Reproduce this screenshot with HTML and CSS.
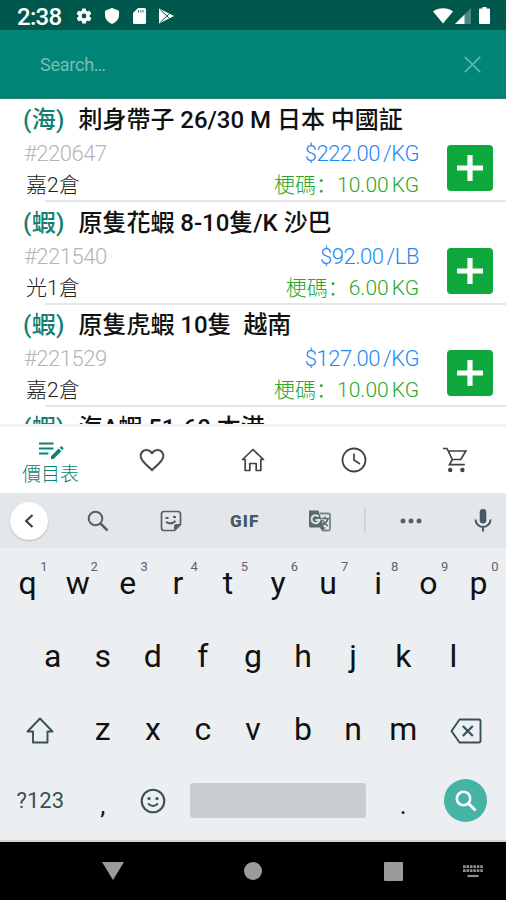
FILE: index.html
```
<!DOCTYPE html>
<html lang="zh-Hant">
<head>
<meta charset="utf-8">
<title>價目表</title>
<link rel="stylesheet" href="styles.css">
</head>
<body>
<div class="phone">
  <header class="status">
    <span class="clock">2:38</span>
    <svg class="st-gear" width="18" height="18" viewBox="0 0 24 24"><path fill="#fff" fill-rule="evenodd" d="M19.4 13a7.500 7.500 0 0 0 0-2l2.100-1.600a.5.5 0 0 0 .1-.6l-2-3.500a.5.5 0 0 0-.6-.2l-2.500 1a7.300 7.300 0 0 0-1.700-1l-.4-2.600a.5.5 0 0 0-.5-.4h-4a.5.5 0 0 0-.5.400l-.4 2.600a7.300 7.300 0 0 0-1.700 1l-2.500-1a.5.5 0 0 0-.6.2l-2 3.500a.5.5 0 0 0 .1.600L4.600 11a7.500 7.500 0 0 0 0 2l-2.100 1.600a.5.5 0 0 0-.1.600l2 3.500c.1.200.4.300.6.200l2.500-1a7.300 7.300 0 0 0 1.700 1l.4 2.600c0 .3.200.4.500.4h4c.3 0 .5-.1.500-.4l.4-2.600a7.300 7.300 0 0 0 1.700-1l2.500 1c.2.100.5 0 .6-.2l2-3.500a.5.5 0 0 0-.1-.6zM12 15.200a3.200 3.200 0 1 1 0-6.400 3.200 3.200 0 0 1 0 6.400z"/></svg>
    <svg class="st-shield" width="14" height="16" viewBox="0 0 14 16"><path fill="#fff" d="M7 0l7 2.800V7c0 4-3 7.500-7 9-4-1.500-7-5-7-9V2.800z"/></svg>
    <svg class="st-card" width="13" height="16" viewBox="0 0 13 16"><path fill="#fff" d="M5 0h6.500Q13 0 13 1.500v13q0 1.500-1.500 1.500h-10Q0 16 0 14.500V5z"/><path stroke="#00574b" stroke-width=".8" d="M5.500 2v2.500M7.800 2v2.500M10 2v2.500"/></svg>
    <svg class="st-play" width="15" height="16" viewBox="0 0 15 16"><path fill="#fff" d="M0 .5l15 7.500L0 15.500z"/><path fill="none" stroke="#00574b" stroke-width="1" d="M1.500 2l8.500 8M1.500 14L10 6"/></svg>
    <span class="grow"></span>
    <svg class="st-wifi" width="20" height="16" viewBox="0 0 20 16"><path fill="#fff" d="M0 3.500C5.500-.8 14.500-.8 20 3.500L10 15.500z"/></svg>
    <svg class="st-signal" width="16" height="16" viewBox="0 0 16 16"><path fill="#4d8981" d="M9 7l7-7v16H9z"/><path fill="#fff" d="M0 16l9.500-9.500V16z"/></svg>
    <svg class="st-batt" width="11" height="17" viewBox="0 0 11 17"><path fill="#fff" d="M3.500 0h4v1.500H10q1 0 1 1V16q0 1-1 1H1q-1 0-1-1V2.500q0-1 1-1h2.500z"/></svg>
  </header>

  <div class="search">
    <span class="placeholder">Search…</span>
    <svg width="17" height="17" viewBox="0 0 17 17"><path fill="none" stroke="#65b3aa" stroke-width="1.700" d="M.8.8l15.400 15.400M16.200.8L.8 16.200"/></svg>
  </div>

  <main class="list">
    <article class="item">
      <h2><span class="cat">(海)</span><span class="name">刺身帶子 26/30 M 日本 中國証</span></h2>
      <div class="line"><span class="code">#220647</span><span class="price">$222.00<i></i>/KG</span></div>
      <div class="line store-line"><span class="store">嘉2倉</span><span class="stock">梗碼<b lang="zh-Hans">：</b>10.00<i></i>KG</span></div>
      <button class="add"><svg width="26" height="26" viewBox="0 0 26 26"><path stroke="#fff" stroke-width="5.200" d="M13 0v26M0 13h26"/></svg></button>
    </article>
    <article class="item">
      <h2><span class="cat">(蝦)</span><span class="name">原隻花蝦 8-10隻/K 沙巴</span></h2>
      <div class="line"><span class="code">#221540</span><span class="price">$92.00<i></i>/LB</span></div>
      <div class="line store-line"><span class="store">光1倉</span><span class="stock">梗碼<b lang="zh-Hans">：</b>6.00<i></i>KG</span></div>
      <button class="add"><svg width="26" height="26" viewBox="0 0 26 26"><path stroke="#fff" stroke-width="5.200" d="M13 0v26M0 13h26"/></svg></button>
    </article>
    <article class="item">
      <h2><span class="cat">(蝦)</span><span class="name">原隻虎蝦 10隻&nbsp; 越南</span></h2>
      <div class="line"><span class="code">#221529</span><span class="price">$127.00<i></i>/KG</span></div>
      <div class="line store-line"><span class="store">嘉2倉</span><span class="stock">梗碼<b lang="zh-Hans">：</b>10.00<i></i>KG</span></div>
      <button class="add"><svg width="26" height="26" viewBox="0 0 26 26"><path stroke="#fff" stroke-width="5.200" d="M13 0v26M0 13h26"/></svg></button>
    </article>
    <article class="item">
      <h2><span class="cat">(蝦)</span><span class="name">海A蝦 51-60 本港</span></h2>
    </article>
  </main>

  <nav class="tabs">
    <a class="tab active"><svg width="26" height="19" viewBox="0 0 26 19"><path stroke="#0b8372" stroke-width="2.200" d="M1 2.500h14.500M1 7.500h14.500M1 12.500h9.500"/><path fill="#0b8372" d="M13 15.300l7.700-7.700 2.600 2.600-7.700 7.700H13zM21.600 6.700l1.200-1.200q.6-.5 1.200 0l1.200 1.200q.5.600 0 1.200l-1.100 1.200z"/></svg><span>價目表</span></a>
    <a class="tab"><svg width="30" height="30" viewBox="0 0 24 24"><path fill="#424242" d="M16.500 3c-1.740 0-3.410.81-4.500 2.090C10.910 3.810 9.240 3 7.500 3 4.420 3 2 5.420 2 8.500c0 3.780 3.400 6.860 8.550 11.540L12 21.350l1.450-1.320C18.600 15.360 22 12.280 22 8.500 22 5.420 19.580 3 16.500 3zm-4.400 15.550l-.1.100-.1-.1C7.140 14.240 4 11.390 4 8.500 4 6.500 5.500 5 7.500 5c1.540 0 3.040.99 3.570 2.360h1.870C13.460 5.990 14.960 5 16.500 5c2 0 3.500 1.500 3.500 3.500 0 2.890-3.140 5.740-7.900 10.050z" stroke="#fff" stroke-width=".5"/></svg></a>
    <a class="tab"><svg width="28" height="28" viewBox="0 0 28 28"><path fill="none" stroke="#424242" stroke-width="1.700" stroke-linejoin="round" d="M3.500 13.500L14 3.500l10.500 10h-2.700V24.500h-4.600v-7h-6.400v7H6.200V13.500z"/></svg></a>
    <a class="tab"><svg width="28" height="28" viewBox="0 0 28 28"><circle cx="14" cy="14" r="11.500" fill="none" stroke="#424242" stroke-width="1.800"/><path fill="none" stroke="#424242" stroke-width="1.700" d="M14 7.500V14l6 4"/></svg></a>
    <a class="tab"><svg width="28" height="28" viewBox="0 0 28 28"><path fill="none" stroke="#424242" stroke-width="1.700" d="M2 2.500h4l5.300 11h8.500L24.800 5H7.200M11.300 13.500L8.500 18.700h15.300"/><circle cx="9.200" cy="24" r="2.200" fill="#424242"/><circle cx="21.400" cy="24" r="2.200" fill="#424242"/></svg></a>
  </nav>

  <section class="tools">
    <span class="back"><svg width="10" height="14" viewBox="0 0 10 14"><path fill="none" stroke="#37474f" stroke-width="2.200" d="M8.500 1L2.200 7l6.300 6"/></svg></span>
    <span class="tool"><svg width="22" height="22" viewBox="0 0 22 22"><circle cx="8.500" cy="8.500" r="6.800" fill="none" stroke="#546268" stroke-width="2"/><path stroke="#546268" stroke-width="2.500" d="M13.500 13.500l7 7"/></svg></span>
    <span class="tool"><svg width="22" height="22" viewBox="0 0 22 22"><path fill="none" stroke="#546268" stroke-width="1.700" d="M4 1.500h14q2.500 0 2.500 2.500v10.500l-6 6H4Q1.500 20.500 1.500 18V4Q1.500 1.500 4 1.500z"/><path fill="#546268" d="M20.500 14h-4q-2.500 0-2.500 2.500v4.500zM5.500 7h3v2h-3zM13 6h3v2h-3z"/><path fill="none" stroke="#546268" stroke-width="2.200" d="M6 11.800q5 3.500 9.500-.8"/></svg></span>
    <span class="tool gif">GIF</span>
    <span class="tool"><svg width="24" height="24" viewBox="0 0 24 24"><path fill="none" stroke="#7a868a" stroke-width="1.800" d="M12 4.500h8.500q1.500 0 1.500 1.500v14q0 1.500-1.500 1.500h-6"/><path fill="#5b686d" d="M1 1.500h9.500L16 18.500h2L14 22l-2-3.500H2.500Q1 18.500 1 17z"/><path fill="none" stroke="#dfe3e5" stroke-width="2" d="M10.500 7.500A4 4 0 1 0 11.500 11H7.500"/><path fill="none" stroke="#5b686d" stroke-width="1.500" d="M13.500 9.500H21M17 7.500v2M20 9.500q-1 4-5 6M14.500 11q2 4 5.500 6"/></svg></span>
    <span class="divider"></span>
    <span class="tool dots"><svg width="22" height="6" viewBox="0 0 22 6"><g fill="#546268"><circle cx="3" cy="3" r="2.500"/><circle cx="11" cy="3" r="2.500"/><circle cx="19" cy="3" r="2.500"/></g></svg></span>
    <span class="tool mic"><svg width="18" height="23" viewBox="0 0 18 23"><rect x="5.700" y="0" width="6.600" height="14.500" rx="3.300" fill="#455a64"/><path fill="none" stroke="#455a64" stroke-width="2" d="M1.500 10.500a7.500 7.500 0 0 0 15 0M9 18v4.500"/></svg></span>
  </section>

  <section class="keyboard">
    <div class="keys">
      <kbd>q<sup>1</sup></kbd><kbd>w<sup>2</sup></kbd><kbd>e<sup>3</sup></kbd><kbd>r<sup>4</sup></kbd><kbd>t<sup>5</sup></kbd><kbd>y<sup>6</sup></kbd><kbd>u<sup>7</sup></kbd><kbd>i<sup>8</sup></kbd><kbd>o<sup>9</sup></kbd><kbd>p<sup>0</sup></kbd>
    </div>
    <div class="keys">
      <kbd>a</kbd><kbd>s</kbd><kbd>d</kbd><kbd>f</kbd><kbd>g</kbd><kbd>h</kbd><kbd>j</kbd><kbd>k</kbd><kbd>l</kbd>
    </div>
    <div class="keys third">
      <kbd class="wide"><svg width="28" height="27" viewBox="0 0 28 27"><path fill="none" stroke="#37505a" stroke-width="1.900" stroke-linejoin="round" d="M14 1.500L26.500 14.500H21.500V25.500H7V14.500H1.500z"/></svg></kbd><kbd>z</kbd><kbd>x</kbd><kbd>c</kbd><kbd>v</kbd><kbd>b</kbd><kbd>n</kbd><kbd>m</kbd><kbd class="wide"><svg width="32" height="26" viewBox="0 0 32 26"><path fill="none" stroke="#37505a" stroke-width="1.900" stroke-linejoin="round" d="M9.500 1.500H29q1.500 0 1.500 1.500v20q0 1.500-1.500 1.500H9.500L1.500 13z"/><path stroke="#37505a" stroke-width="2.200" d="M12.800 8l10 10M22.800 8l-10 10"/></svg></kbd>
    </div>
    <div class="keys bottom">
      <kbd class="wide sym">?123</kbd><kbd class="comma">,</kbd><kbd><svg width="26" height="26" viewBox="0 0 26 26"><circle cx="13" cy="13" r="11.300" fill="none" stroke="#37505a" stroke-width="2.100"/><g fill="#37505a"><circle cx="9" cy="10.500" r="1.600"/><circle cx="17" cy="10.500" r="1.600"/></g><path fill="none" stroke="#37505a" stroke-width="1.800" d="M8 15.500q5 5 10 0"/></svg></kbd><span class="space"></span><kbd class="dot">.</kbd><kbd class="wide"><span class="go"><svg width="22" height="22" viewBox="0 0 22 22"><circle cx="8.500" cy="8.500" r="6.700" fill="none" stroke="#fff" stroke-width="2.600"/><path stroke="#fff" stroke-width="3" d="M13.500 13.500l7 7"/></svg></span></kbd>
    </div>
  </section>

  <footer class="sysnav">
    <span class="sys"><svg width="22" height="18" viewBox="0 0 22 18"><path fill="#9b9b9b" d="M0 0h22L11 18z"/></svg></span>
    <span class="sys"><svg width="18" height="18" viewBox="0 0 18 18"><circle cx="9" cy="9" r="9" fill="#9b9b9b"/></svg></span>
    <span class="sys"><svg width="19" height="19" viewBox="0 0 19 19"><rect width="19" height="19" rx="1" fill="#9b9b9b"/></svg></span>
    <svg class="ime" width="20" height="13" viewBox="0 0 20 13"><path stroke="#8f8f8f" stroke-width="2.600" stroke-dasharray="2.600 .85" d="M0 1.600h20M0 5.600h20"/><path stroke="#8f8f8f" stroke-width="2.200" d="M4.500 11h11"/></svg>
  </footer>
</div>
</body>
</html>
```

FILE: styles.css
```
* { box-sizing: border-box; }
body {
  margin: 0;
  background: #fff;
  font-family: Roboto, "Noto Sans CJK TC", sans-serif;
}
svg { display: block; flex: none; }
.phone {
  width: 506px;
  height: 900px;
  display: flex;
  flex-direction: column;
  overflow: hidden;
}
.phone > * { flex: none; }
.grow { flex: 1; }

.status {
  height: 30px;
  background: #00574b;
  display: flex;
  align-items: center;
  padding: 1px 16px 0 17px;
}
.clock {
  width: 58px;
  padding-top: 2px;
  color: #fff;
  font-size: 24px;
  font-weight: 500;
  line-height: 28px;
  letter-spacing: -.7px;
}
.st-shield { margin-left: 12px; }
.st-card { margin-left: 14px; }
.st-play { margin-left: 13px; }
.st-signal { margin-left: 2px; }
.st-batt { margin-left: 8px; }

.search {
  height: 69px;
  background: #008577;
  border-bottom: 1px solid #2b7d73;
  display: flex;
  align-items: center;
  justify-content: space-between;
  padding: 0 25px 0 40px;
}
.placeholder { color: #79bdb5; font-size: 18px; letter-spacing: -.25px; }

.list { height: 325px; overflow: hidden; padding-top: 1px; }
.item {
  position: relative;
  height: 102.700px;
  padding: 2px 87px 0 23px;
}
.item::after {
  content: "";
  display: block;
  height: 2px;
  margin: -1px -87px 0 22px;
  background: #e6e6e6;
}
.item h2 {
  margin: 0;
  height: 36px;
  display: flex;
  align-items: center;
  font-size: 24px;
  font-weight: 500;
  line-height: 36px;
  white-space: nowrap;
  color: #111;
}
.cat { width: 55.500px; color: #12806f; letter-spacing: .4px; }
.name { letter-spacing: -.03px; }
.line {
  height: 32px;
  display: flex;
  align-items: center;
  justify-content: space-between;
  font-size: 22px;
  font-weight: 300;
  line-height: 32px;
  white-space: nowrap;
  letter-spacing: -.45px;
}
.line i { display: inline-block; width: 3px; }
.code { color: #b5b5b5; padding-left: 1px; }
.price { color: #1e88f5; }
.store { color: #222; padding-left: 3px; }
.stock { color: #2ba62b; }
.stock b { font-family: "Noto Sans CJK SC", sans-serif; font-weight: 300; line-height: 1; }
.store-line { height: 31px; line-height: 31px; font-size: 21px; letter-spacing: 0; }
.add {
  position: absolute;
  right: 13px;
  top: 45px;
  width: 46px;
  height: 46px;
  padding: 0;
  border: 0;
  border-radius: 4px;
  background: #0fa83c;
  display: grid;
  place-items: center;
}

.tabs {
  height: 69px;
  background: #fff;
  border-top: 3px solid #f4f4f4;
  display: grid;
  grid-template-columns: repeat(5, 1fr);
}
.tab { display: flex; flex-direction: column; align-items: center; justify-content: center; }
.active {
  justify-content: flex-start;
  gap: 2px;
  padding-top: 14px;
  color: #0b8372;
  font-size: 19px;
  font-weight: 300;
  line-height: 26px;
}

.tools {
  height: 55px;
  background: #e4e7e9;
  display: flex;
  align-items: center;
  padding-left: 10px;
}
.back {
  flex: none;
  width: 38px;
  height: 38px;
  border-radius: 50%;
  background: #fff;
  box-shadow: 0 1px 2px #b5babd;
  display: grid;
  place-items: center;
}
.tool { flex: none; width: 73.500px; display: flex; justify-content: center; }
.back + .tool { margin-left: 13px; }
.gif { color: #455a64; font-size: 17px; font-weight: 900; letter-spacing: 1.200px; }
.gif + .tool { margin-left: 2px; }
.divider { flex: none; width: 2px; height: 27px; margin-left: 7px; background: #d2d6d8; }
.dots { width: 90px; }
.mic { width: 50px; padding-left: 4px; }

.keyboard {
  height: 294px;
  background: #eceff1;
  border-bottom: 2px solid #d2d4d5;
}
.keys { height: 73px; display: flex; justify-content: center; align-items: center; }
kbd {
  position: relative;
  width: 50.100px;
  display: flex;
  justify-content: center;
  font-family: Roboto, sans-serif;
  font-size: 32px;
  line-height: 71px;
  color: #111;
}
.keys:not(.bottom) kbd:not(.wide) { height: 73px; line-height: 71px; }
.keys sup {
  position: absolute;
  right: 5px;
  top: 11px;
  font-size: 13px;
  line-height: 16px;
  color: #5d666a;
}
.keys.third kbd:not(.wide) { line-height: 70px; }
.wide { width: 75px; }
.bottom .sym { font-size: 22px; color: #37505a; }
.bottom { height: 67px; }
.bottom kbd { line-height: 67px; }
.bottom .comma, .bottom .dot { font-size: 26px; line-height: 60px; padding-top: 8px; }
.space { width: 176px; margin: 0 12px; height: 35px; border-radius: 3px; background: #c8cdd0; }
.go {
  width: 43px;
  height: 43px;
  border-radius: 50%;
  background: #45b3a6;
  display: grid;
  place-items: center;
}

.sysnav {
  height: 58px;
  background: #000;
  display: flex;
  align-items: center;
  padding-left: 43px;
}
.sys { width: 140px; display: flex; justify-content: center; }
```
